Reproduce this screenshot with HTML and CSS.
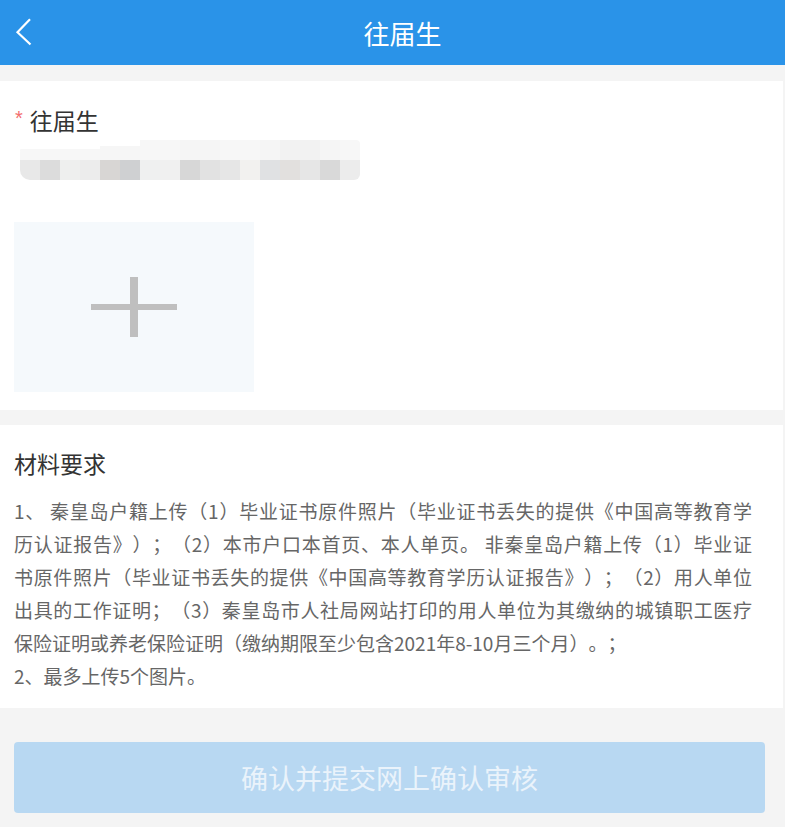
FILE: index.html
```html
<!DOCTYPE html>
<html lang="zh-CN">
<head>
<meta charset="utf-8">
<title>往届生</title>
<link rel="stylesheet" href="styles.css">
</head>
<body>
<header class="topbar">
  <a class="back" href="#" aria-label="返回">
    <svg width="25" height="35" viewBox="0 0 25 35"><polyline points="20,4.3 7.5,17.3 20.5,29.5" fill="none" stroke="#fff" stroke-width="2.2"/></svg>
  </a>
  <h1 class="title">往届生</h1>
  <span class="spacer"></span>
</header>
<main class="page">
  <section class="card upload-card">
    <div class="label"><span class="star">*</span>往届生</div>
    <div class="blurred" aria-hidden="true">
      <div class="row top">
        <i class="b w"></i><i class="b w"></i><i class="b w"></i><i class="b w"></i><i class="b w2"></i><i class="b w2"></i><i class="b l1"></i><i class="b l1"></i><i class="b l2"></i><i class="b l2"></i><i class="b l1"></i><i class="b l1"></i><i class="b l2"></i><i class="b l3"></i><i class="b l3"></i><i class="b l2"></i><i class="b l1"></i>
      </div>
      <div class="row bottom">
        <i class="b c1"></i><i class="b c2"></i><i class="b c3"></i><i class="b c4"></i><i class="b c5"></i><i class="b c6"></i><i class="b c7"></i><i class="b c8"></i><i class="b c9"></i><i class="b c10"></i><i class="b c11"></i><i class="b c12"></i><i class="b c13"></i><i class="b c14"></i><i class="b c15"></i><i class="b c16"></i><i class="b c17"></i>
      </div>
    </div>
    <button class="uploader" type="button" aria-label="上传图片"><span class="plus-h"></span><span class="plus-v"></span></button>
  </section>
  <section class="card req-card">
    <h2 class="req-title">材料要求</h2>
    <p class="req-text">
      <span class="jl">1、 秦皇岛户籍上传（1）毕业证书原件照片（毕业证书丢失的提供《中国高等教育学</span>
      <span class="jl">历认证报告》）；（2）本市户口本首页、本人单页。 非秦皇岛户籍上传（1）毕业证</span>
      <span class="jl">书原件照片（毕业证书丢失的提供《中国高等教育学历认证报告》）；（2）用人单位</span>
      <span class="jl">出具的工作证明；（3）秦皇岛市人社局网站打印的用人单位为其缴纳的城镇职工医疗</span>
      <span class="ll">保险证明或养老保险证明（缴纳期限至少包含2021年8-10月三个月）。；</span>
      <span class="ll">2、最多上传5个图片。</span>
    </p>
  </section>
  <button class="submit" type="button">确认并提交网上确认审核</button>
</main>
</body>
</html>
```

FILE: styles.css
```css
* { box-sizing: border-box; }
html, body { margin: 0; padding: 0; }
body {
  background: #f4f4f4;
  font-family: "Noto Sans CJK SC", "Noto Sans", sans-serif;
  width: 785px;
  min-height: 827px;
  overflow: hidden;
}
.topbar {
  height: 65px;
  background: #2a93e8;
  display: grid;
  grid-template-columns: 1fr auto 1fr;
  align-items: center;
}
.back {
  display: flex;
  align-items: center;
  padding-left: 10px;
  height: 35px;
}
.back svg { display: block; }
.title {
  margin: 0;
  padding-left: 20px;
  color: #fff;
  font-size: 26px;
  font-weight: 400;
  line-height: 36px;
}
.page {
  width: 783px;
  padding-top: 16px;
}
.card {
  background: #fff;
}
.upload-card {
  padding: 24px 14px 18px 14px;
}
.label {
  font-size: 23px;
  line-height: 30px;
  color: #333;
  display: flex;
  align-items: center;
}
.star {
  color: #f36d6d;
  font-family: "Liberation Sans", sans-serif;
  font-size: 20px;
  margin-right: 7px;
  margin-left: 1px;
  align-self: flex-start;
  line-height: 26px;
}
.blurred {
  margin: 5px 0 0 6px;
  width: 340px;
  height: 40px;
  border-radius: 12px 4px 6px 10px;
  overflow: hidden;
  display: flex;
  flex-direction: column;
  filter: blur(0.6px);
}
.row { display: flex; height: 20px; }
.b { display: block; width: 20px; height: 20px; }
.top .w { background: linear-gradient(#fff 0 45%, #f7f7f7 45%); }
.top .w2 { background: linear-gradient(#fff 0 30%, #f6f6f6 30%); }
.top .l1 { background: #f7f7f7; }
.top .l2 { background: #f5f5f5; }
.top .l3 { background: #f2f2f2; }
.c1 { background: #e8e8e8; }
.c2 { background: #dcdcdc; }
.c3 { background: #eeefee; }
.c4 { background: #ececec; }
.c5 { background: #d8d6d4; }
.c6 { background: #cfd0d2; }
.c7 { background: #eff0f0; }
.c8 { background: #f0f0f0; }
.c9 { background: #d7d7d7; }
.c10 { background: #e2e2e2; }
.c11 { background: #e6e6e6; }
.c12 { background: #f2f1ef; }
.c13 { background: #e0e1e3; }
.c14 { background: #e2e0de; }
.c15 { background: #e6e6e6; }
.c16 { background: #d9d9d9; }
.c17 { background: #ececec; }
.uploader {
  margin-top: 42px;
  width: 240px;
  height: 170px;
  border: 0;
  padding: 0;
  background: #f5f9fc;
  position: relative;
  display: block;
}
.plus-h, .plus-v {
  position: absolute;
  background: #bfbfbf;
  left: 50%;
  top: 50%;
}
.plus-h { width: 86px; height: 6px; transform: translate(-43px, -3px); }
.plus-v { width: 8px; height: 60px; transform: translate(-4px, -30px); }
.req-card {
  margin-top: 15px;
  padding: 23px 31px 16px 14px;
}
.req-title {
  margin: 0;
  font-size: 23px;
  line-height: 30px;
  font-weight: 400;
  color: #333;
}
.req-text {
  margin: 16px 0 0 0;
  font-size: 19px;
  line-height: 33px;
  color: #666;
  text-spacing-trim: space-all;
}
.jl {
  display: block;
  text-align: justify;
  text-align-last: justify;
  white-space: nowrap;
}
.ll {
  display: block;
  white-space: nowrap;
}
.submit {
  display: block;
  margin: 34px 20px 0 14px;
  width: 751px;
  height: 71px;
  border: 0;
  border-radius: 4px;
  background: #b8d8f2;
  color: #eaf3fb;
  font-family: "Noto Sans CJK SC", sans-serif;
  font-size: 27px;
}
```
